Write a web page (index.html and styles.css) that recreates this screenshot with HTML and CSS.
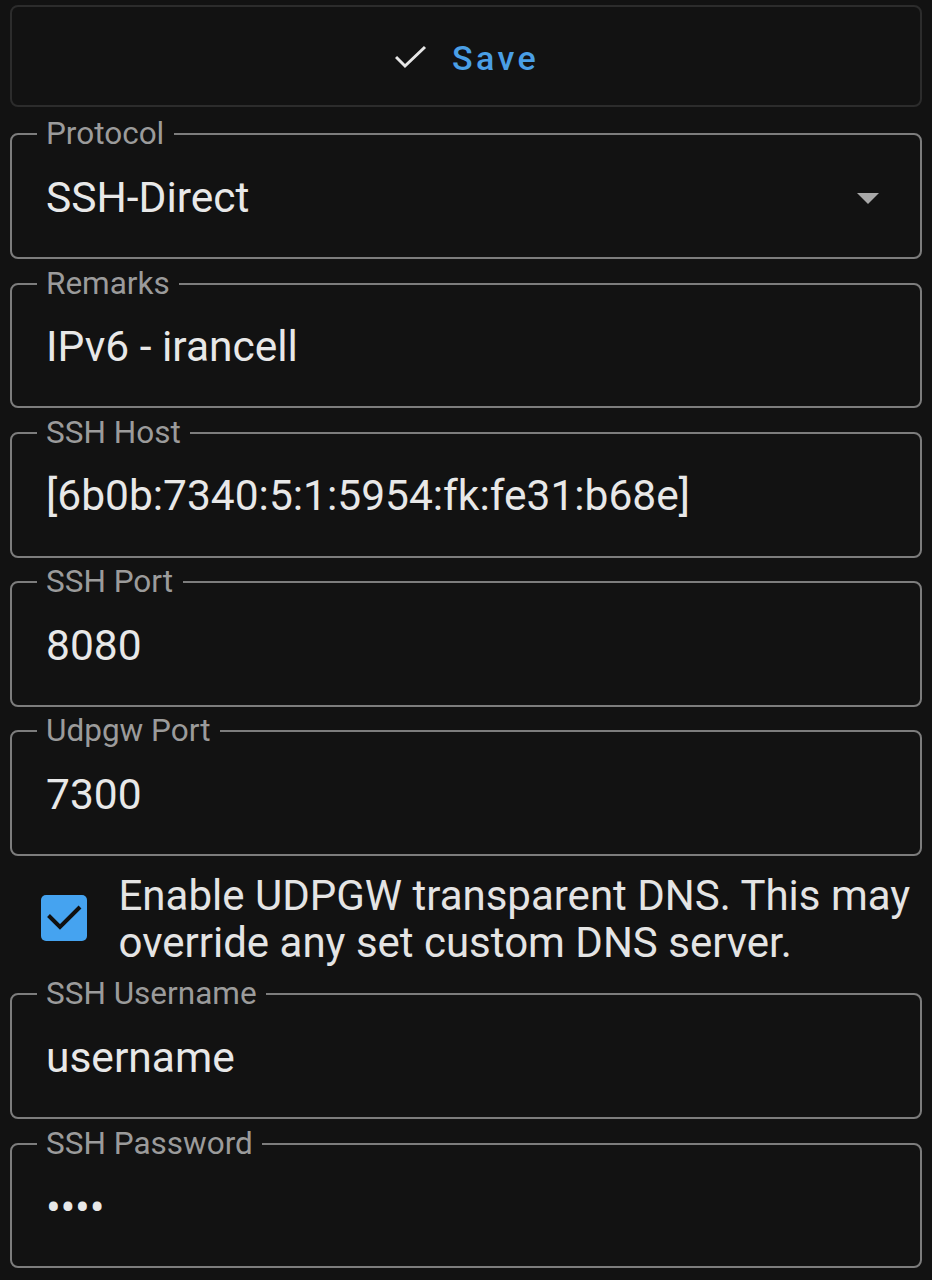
FILE: index.html
```html
<!DOCTYPE html>
<html lang="en">
<head>
<meta charset="utf-8">
<title>SSH profile</title>
<link rel="stylesheet" href="styles.css">
</head>
<body>
<main class="form">
  <button class="save-btn" type="button">
    <svg class="save-icon" width="32" height="24" viewBox="0 0 32 24"><polyline points="1,12 10,21 30,2" fill="none" stroke="#e6e6e6" stroke-width="3"/></svg>
    <span class="save-text">Save</span>
  </button>

  <fieldset class="field">
    <legend class="field-label">Protocol</legend>
    <div class="field-row">
      <span class="field-value">SSH-Direct</span>
      <svg class="dropdown" width="22" height="12" viewBox="0 0 22 12"><polygon points="0,0 22,0 11,11" fill="#a8a8a8"/></svg>
    </div>
  </fieldset>

  <fieldset class="field">
    <legend class="field-label">Remarks</legend>
    <div class="field-row"><span class="field-value">IPv6 - irancell</span></div>
  </fieldset>

  <fieldset class="field">
    <legend class="field-label">SSH Host</legend>
    <div class="field-row"><span class="field-value">[6b0b:7340:5:1:5954:fk:fe31:b68e]</span></div>
  </fieldset>

  <fieldset class="field">
    <legend class="field-label">SSH Port</legend>
    <div class="field-row"><span class="field-value">8080</span></div>
  </fieldset>

  <fieldset class="field">
    <legend class="field-label">Udpgw Port</legend>
    <div class="field-row"><span class="field-value">7300</span></div>
  </fieldset>

  <label class="check-row">
    <span class="checkbox">
      <svg width="46" height="46" viewBox="0 0 46 46"><polyline points="7.5,20.5 19,32 39,12" fill="none" stroke="#101010" stroke-width="4"/></svg>
    </span>
    <span class="check-text">Enable UDPGW transparent DNS. This may override any set custom DNS server.</span>
  </label>

  <fieldset class="field">
    <legend class="field-label">SSH Username</legend>
    <div class="field-row"><span class="field-value">username</span></div>
  </fieldset>

  <fieldset class="field">
    <legend class="field-label">SSH Password</legend>
    <div class="field-row"><span class="field-value field-secret">••••</span></div>
  </fieldset>
</main>
</body>
</html>
```

FILE: styles.css
```css
html, body {
  margin: 0;
  padding: 0;
  background: #121212;
}

body {
  font-family: Roboto, "Noto Sans", "Liberation Sans", sans-serif;
  color: #e6e6e6;
  height: 1280px;
  overflow: hidden;
}

.form {
  display: flex;
  flex-direction: column;
  gap: 8.5px;
  padding: 5px 10px 0 10px;
}

.save-btn {
  box-sizing: border-box;
  height: 102px;
  margin: 0 0 2.75px 0;
  border: 2px solid #2c2c2c;
  border-radius: 8px;
  background: #121212;
  display: flex;
  align-items: center;
  justify-content: center;
  gap: 25px;
  padding: 0 0 0 2px;
  font-family: inherit;
}

.save-icon {
  display: block;
  margin-top: 1px;
}

.save-text {
  font-size: 34px;
  font-weight: 500;
  letter-spacing: 3.4px;
  color: #4a9fe6;
  line-height: 40px;
  margin-top: 3px;
}

.field {
  margin: 0;
  border: 2px solid #7d7d7d;
  border-radius: 8px;
  padding: 23.5px 41px 35.3px 34px;
  min-width: 0;
}

.field-label {
  font-size: 31.5px;
  line-height: 32px;
  color: #9b9b9b;
  padding: 0 9.5px;
  margin-left: -9.5px;
}

.field-row {
  display: flex;
  align-items: center;
  justify-content: space-between;
  height: 48px;
}

.field-value {
  font-size: 42.5px;
  line-height: 48px;
  color: #e8e8e8;
  white-space: nowrap;
}

.field-secret {
  font-size: 44px;
  letter-spacing: -0.3px;
  margin-top: 2px;
}

.dropdown {
  display: block;
  margin-top: 2px;
}

.check-row {
  display: flex;
  align-items: flex-start;
  gap: 31.5px;
  padding: 7px 0 4px 31px;
}

.checkbox {
  flex: none;
  width: 46px;
  height: 46px;
  border-radius: 5px;
  background: #45a3f0;
  display: block;
  margin-top: 23px;
}

.checkbox svg {
  display: block;
}

.check-text {
  font-size: 42px;
  line-height: 47px;
  color: #e4e4e4;
}
```
